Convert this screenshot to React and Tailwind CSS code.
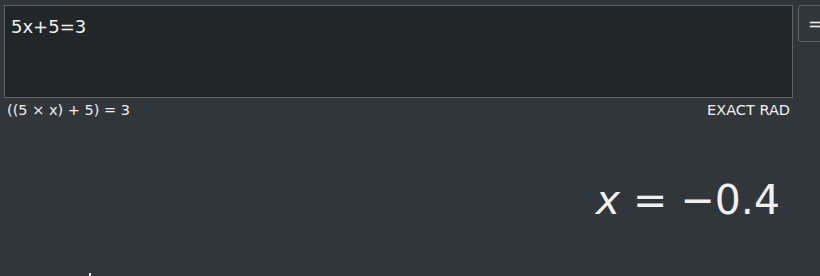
import React from 'react';

const FONT = { fontFamily: '"DejaVu Sans", "Noto Sans", sans-serif' };

export default function App() {
  return (
    <div
      className="relative w-[820px] h-[276px] overflow-hidden bg-[#31363b] text-[#eff0f1]"
      style={FONT}
    >
      {/* Expression input row */}
      <div className="flex gap-[5px] pl-[4px] pt-[5px]">
        <div className="w-[789px] h-[93px] shrink-0 border border-[#5f6368] bg-[#232629] px-[6px] pt-[9px]">
          <span className="text-[18px] leading-[24px] text-[#eff0f1]">5x+5=3</span>
        </div>
        <button className="w-[40px] h-[37px] shrink-0 rounded-[3px] border border-[#5f6368] bg-[#31363b] pl-[9px] text-left text-[18px] leading-none text-[#eff0f1]">
          =
        </button>
      </div>

      {/* Parsed expression + mode */}
      <div className="flex w-[790px] items-center justify-between pl-[7px] pt-[2px]">
        <span className="text-[14.5px] leading-[20px]">((5 × x) + 5) = 3</span>
        <span className="text-[14.5px] leading-[20px]">EXACT RAD</span>
      </div>

      {/* Result */}
      <div className="flex w-[780px] justify-end pt-[57px]">
        <span className="text-[41px] leading-[46px] whitespace-pre">
          <i>x</i> = −0.4
        </span>
      </div>

      {/* mouse pointer tip */}
      <div className="absolute left-[89px] top-[273px] h-[3px] w-[2px] bg-[#e8e8e8]" />
    </div>
  );
}
